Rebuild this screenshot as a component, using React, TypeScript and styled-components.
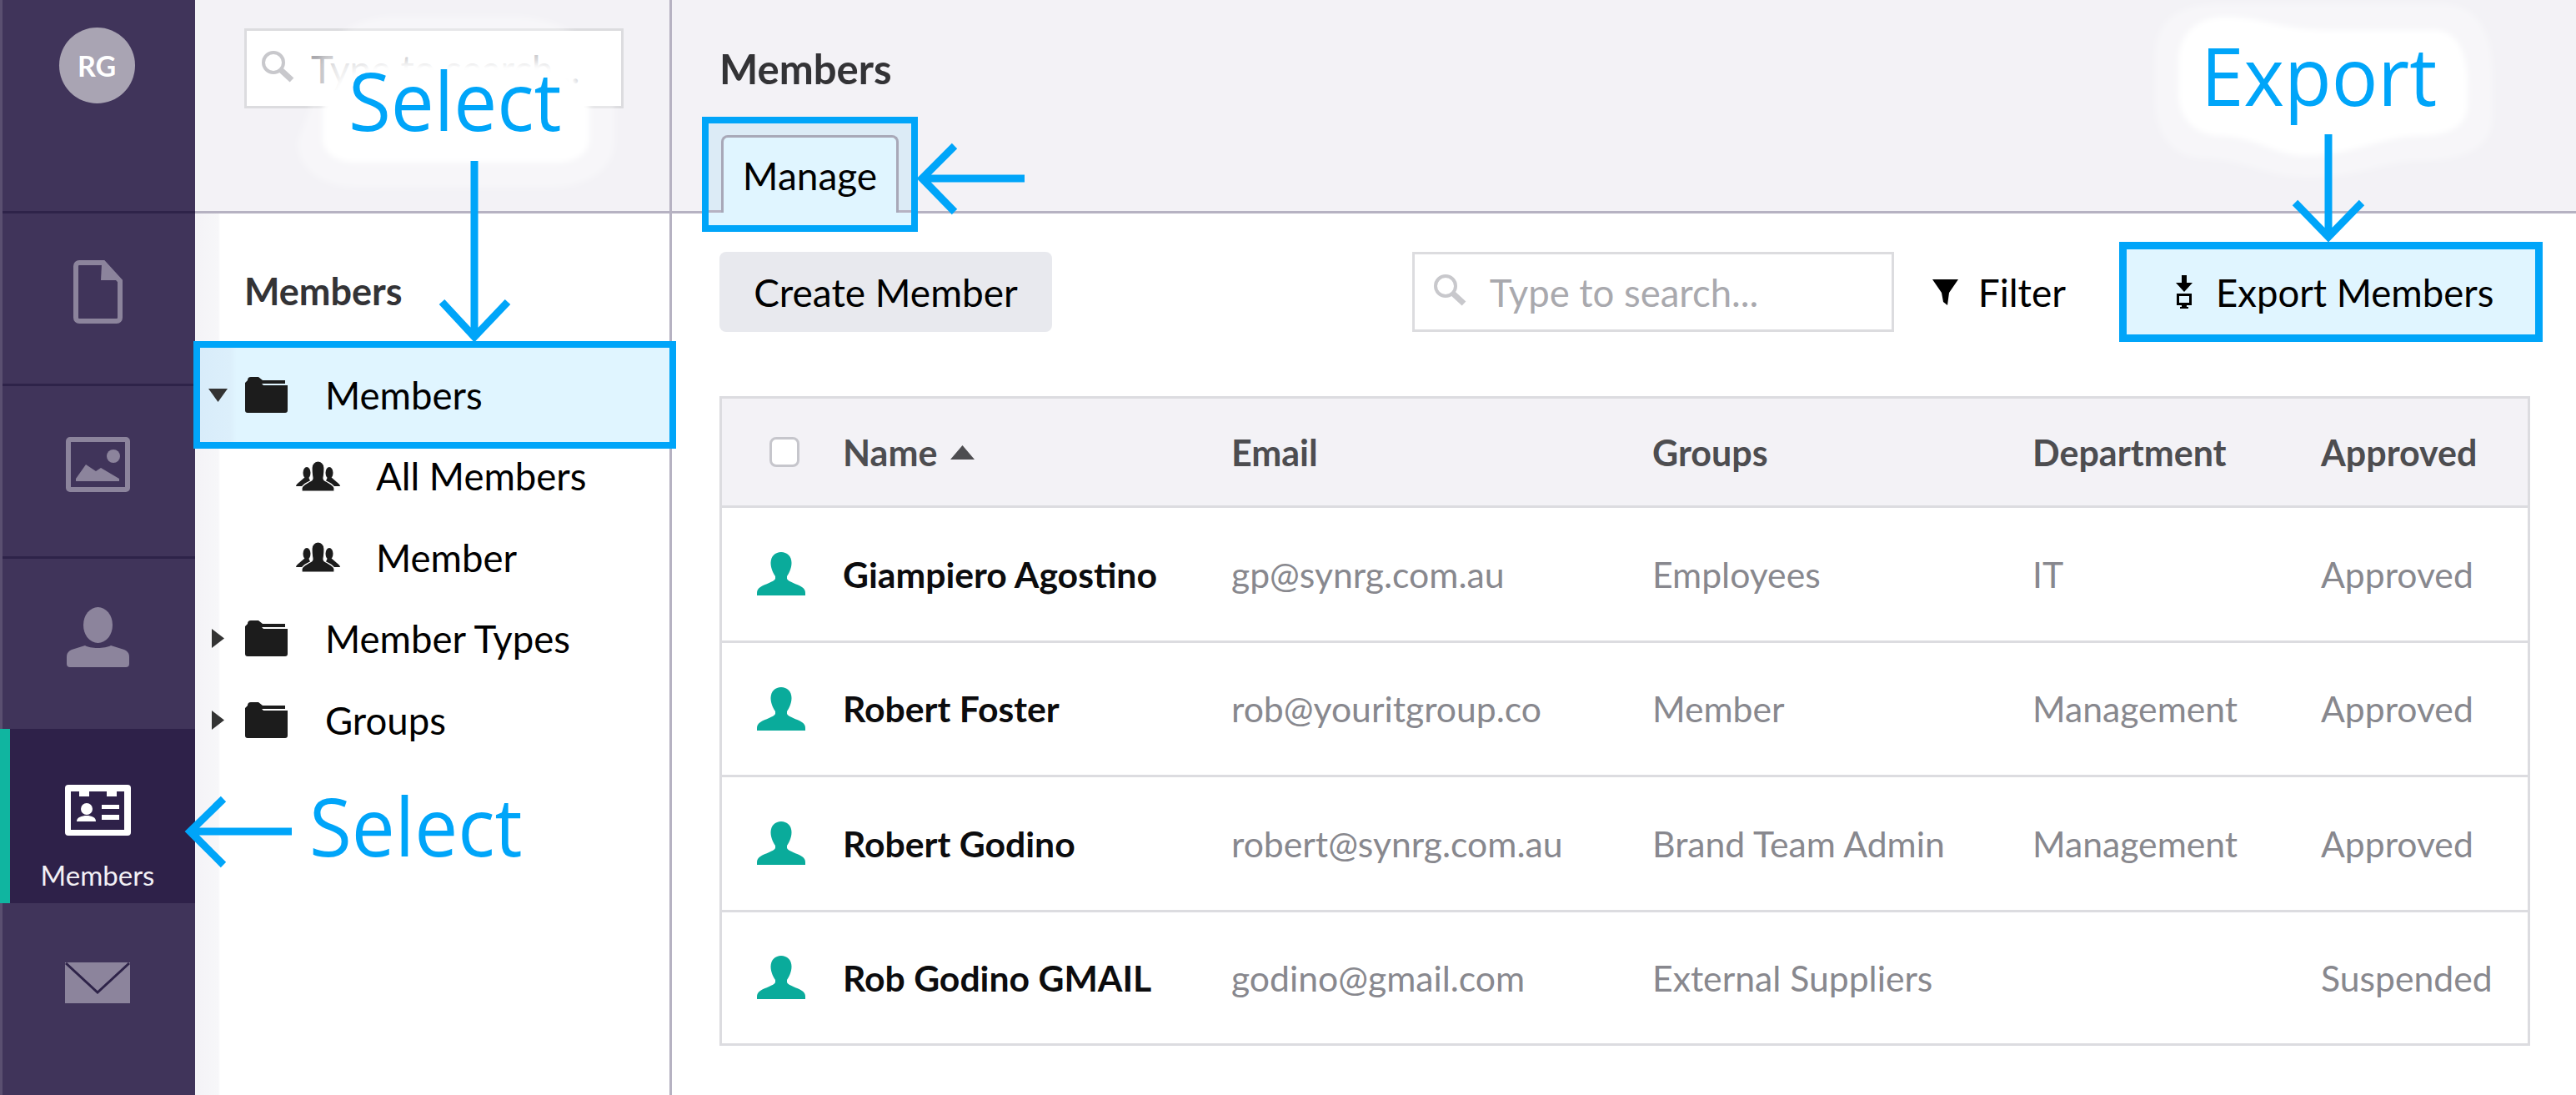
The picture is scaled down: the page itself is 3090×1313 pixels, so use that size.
import React from 'react';
import styled, { createGlobalStyle } from 'styled-components';

const Global = createGlobalStyle`
  html, body { margin: 0; padding: 0; background: #fff; }
  * { box-sizing: border-box; }
  body { font-family: Lato, "Open Sans", sans-serif; color: #000; }
`;

const Page = styled.div`
  position: relative;
  display: flex;
  width: 3090px;
  height: 1313px;
  overflow: hidden;
  background: #fff;
`;

/* ---- left rail ---- */
const Rail = styled.nav`
  width: 234px;
  flex: none;
  display: flex;
  flex-direction: column;
  background: #40345a;
  border-left: 3px solid #5a4f70;
`;
const AvatarCell = styled.div`
  height: 256px;
  flex: none;
  display: flex;
  justify-content: center;
  padding: 33px 5px 0 0;
  border-bottom: 3px solid #2e2349;
`;
const Avatar = styled.div`
  width: 91px;
  height: 91px;
  border-radius: 50%;
  background: #a9a4b3;
  color: #fff;
  font-size: 34px;
  font-weight: 700;
  display: flex;
  align-items: center;
  justify-content: center;
`;
const RailItem = styled.div<{ $h: number; $line?: boolean }>`
  height: ${p => p.$h}px;
  flex: none;
  display: flex;
  align-items: center;
  justify-content: center;
  padding: 0 3px 17px 0;
  color: #8c849c;
  border-bottom: ${p => (p.$line ? '3px solid #2e2349' : '0')};
`;
const RailActive = styled.div`
  height: 209px;
  flex: none;
  margin-left: -3px;
  display: flex;
  flex-direction: column;
  align-items: center;
  padding: 67px 12px 0 0;
  background: #2e2149;
  border-left: 12px solid #10b5a0;
  color: #fff;
`;
const RailLabel = styled.span`
  font-size: 33px;
  line-height: 40px;
  margin-top: 27px;
  color: #f2f0f5;
`;
const RailRest = styled(RailItem)`
  flex: 1;
  align-items: flex-start;
  padding-top: 71px;
`;

/* ---- tree panel ---- */
const TreePanel = styled.aside`
  width: 572px;
  flex: none;
  display: flex;
  flex-direction: column;
  border-right: 3px solid #b6b2c2;
  background: linear-gradient(to right, #f4f3f7 0, #f7f7f9 28px, #fff 30px);
`;
const BandHeader = styled.header`
  height: 256px;
  flex: none;
  background: #f3f2f6;
  border-bottom: 3px solid #b6b2c2;
`;
const TreeHeader = styled(BandHeader)`
  padding: 34px 0 0 59px;
`;
const SearchBox = styled.div<{ $w: number; $pad: number; $gap: number }>`
  width: ${p => p.$w}px;
  height: 96px;
  flex: none;
  display: flex;
  align-items: center;
  gap: ${p => p.$gap}px;
  padding-left: ${p => p.$pad}px;
  background: #fff;
  border: 3px solid #dcdcdf;
  color: #a9a9ae;
  font-size: 45.5px;
  white-space: nowrap;
  overflow: hidden;
`;
const TreeTitle = styled.h2`
  margin: 0;
  padding: 62px 0 0 59px;
  height: 161px;
  flex: none;
  font-size: 45px;
  line-height: 62px;
  font-weight: 700;
  color: #333336;
`;
const TreeRow = styled.div<{ $indent?: boolean }>`
  height: 97.5px;
  flex: none;
  display: flex;
  align-items: center;
  font-size: 45.5px;
  padding-left: ${p => (p.$indent ? '121px' : '16px')};
`;
const TreeRowSelected = styled(TreeRow)`
  position: relative;
  z-index: 2;
  height: 113px;
  margin: 0 0 -8px 6px;
  padding-left: 10px;
  background: linear-gradient(to right, #d8ecfa 0, #dceffb 36px, #e0f5ff 44px);
  outline: 8px solid #00a5f9;
`;
const Caret = styled.span<{ $shift?: number }>`
  width: 44px;
  flex: none;
  display: flex;
  padding-left: ${p => p.$shift || 0}px;
`;
const TreeLabel = styled.span<{ $gap: number }>`
  margin-left: ${p => p.$gap}px;
`;

/* ---- main ---- */
const Main = styled.main`
  flex: 1;
  min-width: 0;
  display: flex;
  flex-direction: column;
`;
const MainHeader = styled(BandHeader)`
  display: flex;
  flex-direction: column;
`;
const MainTitle = styled.h1`
  margin: 0;
  padding: 51px 0 0 57px;
  height: 148px;
  flex: none;
  font-size: 49px;
  line-height: 62px;
  font-weight: 700;
  color: #333336;
`;
const TabFrame = styled.div`
  position: relative;
  z-index: 2;
  margin-left: 44px;
  width: 243px;
  height: 122px;
  flex: none;
  padding: 14px 0 0 15px;
  outline: 8px solid #00a5f9;
  background: linear-gradient(#dcebf6 0 104px, #b6b2c2 104px 107px, #e0f5ff 107px);
`;
const Tab = styled.div`
  width: 213px;
  height: 93px;
  border: 3px solid #a8a8b8;
  border-bottom: 0;
  border-radius: 8px 8px 0 0;
  background: #e0f5ff;
  display: flex;
  align-items: center;
  justify-content: center;
  font-size: 46px;
`;
const Toolbar = styled.div`
  display: flex;
  align-items: center;
  height: 96px;
  margin: 46px 49px 0 57px;
  flex: none;
`;
const CreateButton = styled.button`
  width: 399px;
  height: 96px;
  flex: none;
  border: 0;
  border-radius: 8px;
  background: #e8e9ee;
  color: #000;
  font: 400 46px Lato, sans-serif;
  margin-right: auto;
`;
const FilterButton = styled.div`
  display: flex;
  align-items: center;
  gap: 24px;
  margin-left: 46px;
  font-size: 46px;
`;
const ExportButton = styled.div`
  position: relative;
  z-index: 2;
  width: 490px;
  height: 102px;
  flex: none;
  margin-left: 73px;
  display: flex;
  align-items: center;
  gap: 28px;
  padding-left: 59px;
  background: #e0f5ff;
  outline: 9px solid #00a5f9;
  font-size: 45.5px;
`;
const Table = styled.div`
  width: 2172px;
  margin: 77px 0 0 57px;
  border: 3px solid #dcdce0;
  flex: none;
`;
const cols = '145px 466px 505px 456px 346px 1fr';
const HeadRow = styled.div`
  display: grid;
  grid-template-columns: ${cols};
  align-items: center;
  height: 131px;
  background: #f3f2f6;
  border-bottom: 3px solid #dcdce0;
  font-size: 43px;
  font-weight: 700;
  color: #4d4d50;
`;
const BodyRow = styled.div`
  display: grid;
  grid-template-columns: ${cols};
  align-items: center;
  height: 161.5px;
  border-bottom: 3px solid #dcdce0;
  font-size: 42.7px;
  color: #88888e;
  &:last-child { border-bottom: 0; height: 157px; }
`;
const CheckCell = styled.div`
  display: flex;
  justify-content: center;
  padding-left: 4px;
`;
const MemberCell = styled.div`
  display: flex;
  justify-content: center;
  padding-right: 4px;
`;
const CheckBox = styled.span`
  width: 36px;
  height: 36px;
  border: 3px solid #c6c6cc;
  border-radius: 8px;
  background: #fff;
`;
const NameHead = styled.div`
  display: flex;
  align-items: center;
  gap: 16px;
`;
const NameCell = styled.div`
  font-weight: 700;
  color: #0c0c0e;
`;

/* ---- annotations laid over the page ---- */
const Overlay = styled.svg`
  position: absolute;
  inset: 0;
  z-index: 5;
  pointer-events: none;
`;
const Callout = styled.span<{ $x: number; $y: number }>`
  position: absolute;
  z-index: 6;
  left: ${p => p.$x}px;
  top: ${p => p.$y}px;
  font-family: "Open Sans", sans-serif;
  font-size: 97px;
  line-height: 120px;
  color: #00a5f9;
  white-space: nowrap;
  transform: scaleX(0.955);
  transform-origin: left center;
`;

/* ---- icons ---- */
const DocIcon = () => (
  <svg width="59" height="76" viewBox="0 0 59 76" fill="none">
    <path d="M7 3H36L56 25V69a4 4 0 0 1-4 4H7a4 4 0 0 1-4-4V7a4 4 0 0 1 4-4Z" stroke="currentColor" strokeWidth="6" />
    <path d="M34 5L36 3 56 24H33Z" fill="currentColor" />
  </svg>
);
const ImageIcon = () => (
  <svg width="77" height="66" viewBox="0 0 77 66">
    <rect x="3" y="3" width="71" height="60" rx="2" fill="none" stroke="currentColor" strokeWidth="6" />
    <circle cx="57" cy="23" r="8" fill="currentColor" />
    <path d="M12 53V50L24 33 36 41 42 37 64 50V53Z" fill="currentColor" />
  </svg>
);
const PersonIcon = () => (
  <svg width="75" height="72" viewBox="0 0 75 72">
    <ellipse cx="37.5" cy="21.5" rx="17.5" ry="21.5" fill="currentColor" />
    <path d="M0 60C0 55 2 53 6 51L22 46C28 50 46 50 53 46L69 51C73 53 75 55 75 60V68a4 4 0 0 1-4 4H4a4 4 0 0 1-4-4Z" fill="currentColor" />
  </svg>
);
const CardIcon = () => (
  <svg width="79" height="61" viewBox="0 0 79 61">
    <rect width="79" height="61" rx="4" fill="#fff" />
    <path d="M7 8H17V14H29V8H50V14H62V8H71V54H7Z" fill="#2e2149" />
    <circle cx="26" cy="29" r="7" fill="#fff" />
    <path d="M14 44C14 39 20 37 26 37S37 39 37 44Z" fill="#fff" />
    <path d="M44 24H65V29H44ZM44 36H65V42H44Z" fill="#fff" />
  </svg>
);
const MailIcon = () => (
  <svg width="78" height="49" viewBox="0 0 78 49">
    <path d="M0 0H78V49H0Z" fill="currentColor" />
    <path d="M1 1L39 36 77 1" fill="none" stroke="#2e2349" strokeWidth="3" />
  </svg>
);
const FolderIcon = () => (
  <svg width="51" height="43" viewBox="0 0 51 43">
    <path d="M3 4a4 4 0 0 1 4-4H16L21 4H48V8H0V7Z" fill="#1c1c1c" />
    <path d="M0 8H20L22 10H51V40a3 3 0 0 1-3 3H3a3 3 0 0 1-3-3Z" fill="#1c1c1c" />
  </svg>
);
const GroupIcon = () => (
  <svg width="53" height="36" viewBox="0 0 53 36" fill="#1c1c1c">
    <ellipse cx="13" cy="14" rx="4.5" ry="7" />
    <path d="M11 19H15L20 30H0C0 28 2 27 4 25Z" />
    <ellipse cx="40" cy="14" rx="4.5" ry="7" />
    <path d="M38 19H42L49 25C51 27 53 28 53 30H33Z" />
    <path d="M7 36V32C8 28 12 27 17 24 21 22 20 20 19.5 17 19 14 19 10 19 8 19 3 23 0 26.5 0S34 3 34 8C34 10 34 14 33.500 17 33 20 32 22 36 24 41 27 45 28 46 32V36Z" stroke="#fff" strokeWidth="1.2" />
  </svg>
);
const CaretDown = () => (
  <svg width="23" height="16" viewBox="0 0 23 16"><path d="M0 0H23L11.5 16Z" fill="#333" /></svg>
);
const CaretRight = () => (
  <svg width="15" height="23" viewBox="0 0 15 23"><path d="M0 0L15 11.5 0 23Z" fill="#333" /></svg>
);
const SearchGlyph = styled.svg`
  flex: none;
  margin-bottom: 6px;
`;
const SearchIcon = () => (
  <SearchGlyph width="41" height="39" viewBox="0 0 41 39" fill="none">
    <circle cx="15" cy="15" r="12" stroke="#c8c8cc" strokeWidth="4" />
    <path d="M24 24L37 36" stroke="#c8c8cc" strokeWidth="7" />
  </SearchGlyph>
);
const FunnelIcon = () => (
  <svg width="31" height="31" viewBox="0 0 31 31"><path d="M0 0H31L20 16 18 31 13 27 11 16Z" fill="#000" /></svg>
);
const ExportIcon = () => (
  <svg width="20" height="40" viewBox="0 0 20 40">
    <path d="M7 0H13V9H20L10 20 0 9H7Z" fill="#000" />
    <rect x="2.500" y="23.500" width="15" height="11" fill="none" stroke="#000" strokeWidth="3" />
    <path d="M7 35H13V38H15V40H5V38H7Z" fill="#000" />
  </svg>
);
const SortUp = () => (
  <svg width="29" height="17" viewBox="0 0 29 17"><path d="M14.5 0L29 17H0Z" fill="#4d4d50" /></svg>
);
const MemberIcon = () => (
  <svg width="58" height="52" viewBox="0 0 58 52">
    <path d="M29 0C36 0 41.500 5 41.500 13 41.500 20 38 26 36 29V32C38 36 48 38 54 42 57 44 58 46 58 49V52H0V49C0 46 1 44 4 42 10 38 20 36 22 32V29C20 26 16.500 20 16.500 13 16.500 5 22 0 29 0Z" fill="#0aab9b" />
  </svg>
);

const members = [
  ['Giampiero Agostino', 'gp@synrg.com.au', 'Employees', 'IT', 'Approved'],
  ['Robert Foster', 'rob@youritgroup.co', 'Member', 'Management', 'Approved'],
  ['Robert Godino', 'robert@synrg.com.au', 'Brand Team Admin', 'Management', 'Approved'],
  ['Rob Godino GMAIL', 'godino@gmail.com', 'External Suppliers', '', 'Suspended'],
];

export default function App() {
  return (
    <Page>
      <Global />
      <Rail>
        <AvatarCell><Avatar>RG</Avatar></AvatarCell>
        <RailItem $h={207} $line><DocIcon /></RailItem>
        <RailItem $h={207} $line><ImageIcon /></RailItem>
        <RailItem $h={204}><PersonIcon /></RailItem>
        <RailActive><CardIcon /><RailLabel>Members</RailLabel></RailActive>
        <RailRest $h={230}><MailIcon /></RailRest>
      </Rail>

      <TreePanel>
        <TreeHeader>
          <SearchBox $w={455} $pad={17} $gap={19}><SearchIcon />Type to search...</SearchBox>
        </TreeHeader>
        <TreeTitle>Members</TreeTitle>
        <TreeRowSelected>
          <Caret><CaretDown /></Caret><FolderIcon /><TreeLabel $gap={45}>Members</TreeLabel>
        </TreeRowSelected>
        <TreeRow $indent>
          <GroupIcon /><TreeLabel $gap={43}>All Members</TreeLabel>
        </TreeRow>
        <TreeRow $indent>
          <GroupIcon /><TreeLabel $gap={43}>Member</TreeLabel>
        </TreeRow>
        <TreeRow>
          <Caret $shift={4}><CaretRight /></Caret><FolderIcon /><TreeLabel $gap={45}>Member Types</TreeLabel>
        </TreeRow>
        <TreeRow>
          <Caret $shift={4}><CaretRight /></Caret><FolderIcon /><TreeLabel $gap={45}>Groups</TreeLabel>
        </TreeRow>
      </TreePanel>

      <Main>
        <MainHeader>
          <MainTitle>Members</MainTitle>
          <TabFrame><Tab>Manage</Tab></TabFrame>
        </MainHeader>
        <Toolbar>
          <CreateButton>Create Member</CreateButton>
          <SearchBox $w={578} $pad={22} $gap={27}><SearchIcon />Type to search...</SearchBox>
          <FilterButton><FunnelIcon />Filter</FilterButton>
          <ExportButton><ExportIcon />Export Members</ExportButton>
        </Toolbar>
        <Table>
          <HeadRow>
            <CheckCell><CheckBox /></CheckCell>
            <NameHead>Name <SortUp /></NameHead>
            <div>Email</div>
            <div>Groups</div>
            <div>Department</div>
            <div>Approved</div>
          </HeadRow>
          {members.map(m => (
            <BodyRow key={m[0]}>
              <MemberCell><MemberIcon /></MemberCell>
              <NameCell>{m[0]}</NameCell>
              <div>{m[1]}</div>
              <div>{m[2]}</div>
              <div>{m[3]}</div>
              <div>{m[4]}</div>
            </BodyRow>
          ))}
        </Table>
      </Main>

      <Overlay width="3090" height="1313" viewBox="0 0 3090 1313" fill="none">
        <defs>
          <filter id="soft" x="-10%" y="-10%" width="120%" height="120%">
            <feGaussianBlur stdDeviation="3" />
          </filter>
          <filter id="softer" x="-10%" y="-30%" width="120%" height="160%">
            <feGaussianBlur stdDeviation="7" />
          </filter>
        </defs>
        <path filter="url(#softer)" fill="#fff" fillOpacity="0.75" d="M395 72H690V110H395Z" />
        <g filter="url(#soft)">
          <path fill="#fff" fillOpacity="0.32" d="M372 130C372 60 410 22 470 20H620C690 22 737 70 737 130V170C737 205 700 225 660 225H430C390 225 357 205 357 170Z" />
          <path fill="#fff" d="M387 130C395 100 420 80 460 78H640C680 80 700 100 707 130V165C707 185 690 195 665 195H430C405 195 387 185 387 165Z" />
          <path fill="#fff" fillOpacity="0.32" d="M2585 70C2585 25 2610 6 2660 5H2930C2970 6 2990 35 2990 90V140C2990 175 2960 193 2900 193 2860 193 2830 213 2770 213 2720 213 2690 190 2640 190 2605 188 2585 160 2585 120Z" />
          <path fill="#fff" d="M2613 75C2613 40 2635 20 2670 20 2710 20 2740 36 2790 36H2915C2945 33 2960 60 2960 100V125C2960 150 2940 163 2900 163 2860 163 2820 187 2765 187 2730 187 2705 163 2660 163 2630 160 2613 140 2613 110Z" />
        </g>
        <g stroke="#00a5f9" strokeWidth="9">
          <path d="M569 193V402M530 362L569 404 609 362" />
          <path d="M1229 214H1108M1145 175L1106 214 1145 254" />
          <path d="M2793 161V284M2753 243L2793 284 2833 243" />
          <path d="M350 997H232M268 958L228 997 268 1037" />
        </g>
      </Overlay>
      <Callout $x={418} $y={59}>Select</Callout>
      <Callout $x={371} $y={929}>Select</Callout>
      <Callout $x={2640} $y={29}>Export</Callout>
    </Page>
  );
}
